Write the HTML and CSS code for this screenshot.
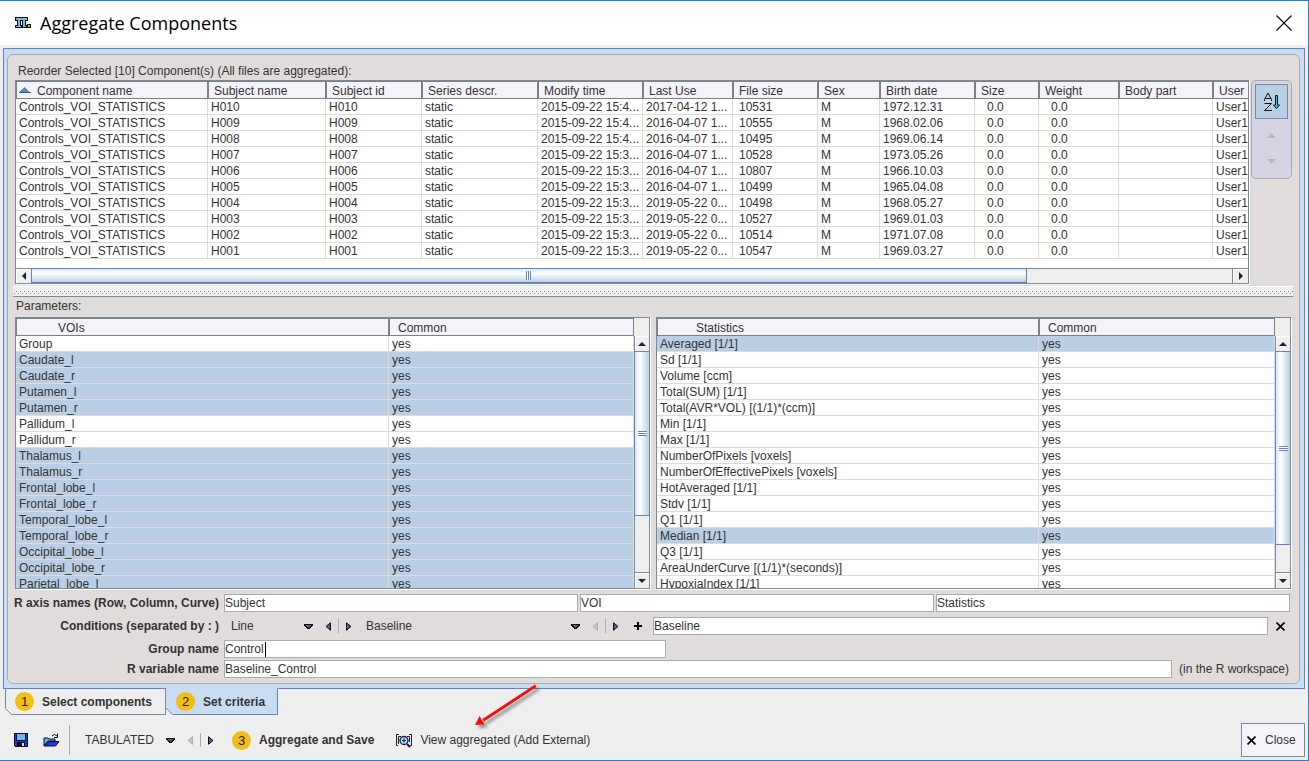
FILE: index.html
```html
<!DOCTYPE html>
<html lang="en">
<head>
<meta charset="utf-8">
<title>Aggregate Components</title>
<link rel="stylesheet" href="styles.css">
</head>
<body>
<svg class="defs" aria-hidden="true">
  <symbol id="down" viewBox="0 0 9 5" shape-rendering="crispEdges"><path d="M0 0H9V2H8V3H7V4H6V5H3V4H2V3H1V2H0Z" fill="#111"/><path d="M2 1H7V2H6V3H5V4H4V3H3V2H2Z" fill="#5a5a8c"/></symbol>
  <symbol id="left" viewBox="0 0 6 9"><path d="M5.500.700V8.300L1 4.500Z" fill="#5a5a8c" stroke="#111"/></symbol>
  <symbol id="left-off" viewBox="0 0 6 9"><path d="M5.500.700V8.300L1 4.500Z" fill="#c4c4c4" stroke="#b0b0b0"/></symbol>
  <symbol id="right" viewBox="0 0 6 9"><path d="M.500.700V8.300L5 4.500Z" fill="#5a5a8c" stroke="#111"/></symbol>
  <symbol id="cross" viewBox="0 0 9 9"><path d="M.500.500L8.500 8.500M8.500.500L.500 8.500" stroke="#000" stroke-width="1.600"/></symbol>
</svg>
<div class="window">
  <header class="titlebar">
    <svg class="logo" width="16" height="12" viewBox="0 0 16 12" shape-rendering="crispEdges"><path d="M0 0H13V4H11V8H12V11H7V4H6V8H7V11H0V8H2V4H0Z" fill="#111"/><path d="M1 1H12V3H10V9H11V10H8V3H5V9H6V10H1V9H3V3H1Z" fill="#7cb8de"/><path d="M12 7H16V11H12Z" fill="#111"/><path d="M13 8H15V10H13Z" fill="#f59a23"/></svg>
    <h1>Aggregate Components</h1>
    <button class="x" aria-label="Close window"><svg width="16" height="16" viewBox="0 0 16 16"><path d="M.500.500L15.500 15.500M15.500.500L.500 15.500" stroke="#000" stroke-width="1.100"/></svg></button>
  </header>

  <main class="sheet">
    <div class="panel">
      <h2 class="caption">Reorder Selected [10] Component(s) (All files are aggregated):</h2>
      <div class="top">
        <div class="pane">
          <div class="clip components">
            <table class="comp">
              <colgroup><col class="w192"><col class="w118"><col class="w96"><col class="w116"><col class="w105"><col class="w90"><col class="w85"><col class="w62"><col class="w95"><col class="w64"><col class="w80"><col class="w94"><col class="w90"></colgroup>
              <thead><tr><th><svg class="sort" width="12" height="6" viewBox="0 0 12 6"><path d="M1 5.500L6 .500L11 5.500Z" fill="#6d7fae"/><path d="M0 5.500H12M1 5L6 .500" stroke="#1c6f95" fill="none"/></svg>Component name</th><th>Subject name</th><th>Subject id</th><th>Series descr.</th><th>Modify time</th><th>Last Use</th><th>File size</th><th>Sex</th><th>Birth date</th><th>Size</th><th>Weight</th><th>Body part</th><th>User</th></tr></thead>
              <tbody>
              <tr><td>Controls_VOI_STATISTICS</td><td>H010</td><td>H010</td><td>static</td><td>2015-09-22 15:4...</td><td>2017-04-12 1...</td><td>10531</td><td>M</td><td>1972.12.31</td><td>0.0</td><td>0.0</td><td></td><td>User1</td></tr>
              <tr><td>Controls_VOI_STATISTICS</td><td>H009</td><td>H009</td><td>static</td><td>2015-09-22 15:4...</td><td>2016-04-07 1...</td><td>10555</td><td>M</td><td>1968.02.06</td><td>0.0</td><td>0.0</td><td></td><td>User1</td></tr>
              <tr><td>Controls_VOI_STATISTICS</td><td>H008</td><td>H008</td><td>static</td><td>2015-09-22 15:4...</td><td>2016-04-07 1...</td><td>10495</td><td>M</td><td>1969.06.14</td><td>0.0</td><td>0.0</td><td></td><td>User1</td></tr>
              <tr><td>Controls_VOI_STATISTICS</td><td>H007</td><td>H007</td><td>static</td><td>2015-09-22 15:3...</td><td>2016-04-07 1...</td><td>10528</td><td>M</td><td>1973.05.26</td><td>0.0</td><td>0.0</td><td></td><td>User1</td></tr>
              <tr><td>Controls_VOI_STATISTICS</td><td>H006</td><td>H006</td><td>static</td><td>2015-09-22 15:3...</td><td>2016-04-07 1...</td><td>10807</td><td>M</td><td>1966.10.03</td><td>0.0</td><td>0.0</td><td></td><td>User1</td></tr>
              <tr><td>Controls_VOI_STATISTICS</td><td>H005</td><td>H005</td><td>static</td><td>2015-09-22 15:3...</td><td>2016-04-07 1...</td><td>10499</td><td>M</td><td>1965.04.08</td><td>0.0</td><td>0.0</td><td></td><td>User1</td></tr>
              <tr><td>Controls_VOI_STATISTICS</td><td>H004</td><td>H004</td><td>static</td><td>2015-09-22 15:3...</td><td>2019-05-22 0...</td><td>10498</td><td>M</td><td>1968.05.27</td><td>0.0</td><td>0.0</td><td></td><td>User1</td></tr>
              <tr><td>Controls_VOI_STATISTICS</td><td>H003</td><td>H003</td><td>static</td><td>2015-09-22 15:3...</td><td>2019-05-22 0...</td><td>10527</td><td>M</td><td>1969.01.03</td><td>0.0</td><td>0.0</td><td></td><td>User1</td></tr>
              <tr><td>Controls_VOI_STATISTICS</td><td>H002</td><td>H002</td><td>static</td><td>2015-09-22 15:3...</td><td>2019-05-22 0...</td><td>10514</td><td>M</td><td>1971.07.08</td><td>0.0</td><td>0.0</td><td></td><td>User1</td></tr>
              <tr><td>Controls_VOI_STATISTICS</td><td>H001</td><td>H001</td><td>static</td><td>2015-09-22 15:3...</td><td>2019-05-22 0...</td><td>10547</td><td>M</td><td>1969.03.27</td><td>0.0</td><td>0.0</td><td></td><td>User1</td></tr>
              </tbody>
            </table>
          </div>
          <div class="hbar">
            <button class="step" aria-label="Scroll left"><svg width="4" height="8" viewBox="0 0 4 8"><path d="M4 0V8L0 4Z" fill="#222"/></svg></button>
            <div class="thumb hthumb"></div>
            <div class="track htrack"></div>
            <button class="step" aria-label="Scroll right"><svg width="4" height="8" viewBox="0 0 4 8"><path d="M0 0V8L4 4Z" fill="#222"/></svg></button>
          </div>
        </div>
        <div class="order">
          <button class="az" aria-label="Sort A to Z"><svg width="18" height="20" viewBox="0 0 18 20"><path d="M1.500 9V7.500L5 1L8.500 7.500V9M2 6.500H8M1.500 11.500H8.500L1.500 18.500H9" fill="none" stroke="#111"/><path d="M12.500 3.500H14.500V13H16.500L13.500 16.500L10.500 13H12.500Z" fill="#22c3ee" stroke="#111"/></svg></button>
          <button class="move" aria-label="Move up" disabled><svg width="9" height="5" viewBox="0 0 9 5"><path d="M0 5L4.500 0L9 5Z" fill="#b9b9b4"/></svg></button>
          <button class="move" aria-label="Move down" disabled><svg width="9" height="5" viewBox="0 0 9 5"><path d="M0 0L4.500 5L9 0Z" fill="#b9b9b4"/></svg></button>
        </div>
      </div>

      <div class="divider"></div>
      <h2 class="caption params-title">Parameters:</h2>

      <div class="params">
        <div class="pane side">
          <div class="clip">
            <table class="list">
              <colgroup><col class="w373"><col></colgroup>
              <thead><tr><th>VOIs</th><th>Common</th></tr></thead>
              <tbody>
              <tr><td>Group</td><td>yes</td></tr>
              <tr class="sel"><td>Caudate_l</td><td>yes</td></tr>
              <tr class="sel"><td>Caudate_r</td><td>yes</td></tr>
              <tr class="sel"><td>Putamen_l</td><td>yes</td></tr>
              <tr class="sel"><td>Putamen_r</td><td>yes</td></tr>
              <tr><td>Pallidum_l</td><td>yes</td></tr>
              <tr><td>Pallidum_r</td><td>yes</td></tr>
              <tr class="sel"><td>Thalamus_l</td><td>yes</td></tr>
              <tr class="sel"><td>Thalamus_r</td><td>yes</td></tr>
              <tr class="sel"><td>Frontal_lobe_l</td><td>yes</td></tr>
              <tr class="sel"><td>Frontal_lobe_r</td><td>yes</td></tr>
              <tr class="sel"><td>Temporal_lobe_l</td><td>yes</td></tr>
              <tr class="sel"><td>Temporal_lobe_r</td><td>yes</td></tr>
              <tr class="sel"><td>Occipital_lobe_l</td><td>yes</td></tr>
              <tr class="sel"><td>Occipital_lobe_r</td><td>yes</td></tr>
              <tr class="sel"><td>Parietal_lobe_l</td><td>yes</td></tr>
              </tbody>
            </table>
          </div>
          <div class="vbar">
            <div class="corner"></div>
            <button class="step" aria-label="Scroll up"><svg width="8" height="4" viewBox="0 0 8 4"><path d="M0 4H8L4 0Z" fill="#222"/></svg></button>
            <div class="thumb vthumb thumb-75"></div>
            <div class="track vtrack"></div>
            <button class="step" aria-label="Scroll down"><svg width="8" height="4" viewBox="0 0 8 4"><path d="M0 0H8L4 4Z" fill="#222"/></svg></button>
          </div>
        </div>
        <div class="pane side">
          <div class="clip">
            <table class="list stats">
              <colgroup><col class="w382"><col></colgroup>
              <thead><tr><th>Statistics</th><th>Common</th></tr></thead>
              <tbody>
              <tr class="sel"><td>Averaged [1/1]</td><td>yes</td></tr>
              <tr><td>Sd [1/1]</td><td>yes</td></tr>
              <tr><td>Volume [ccm]</td><td>yes</td></tr>
              <tr><td>Total(SUM) [1/1]</td><td>yes</td></tr>
              <tr><td>Total(AVR*VOL) [(1/1)*(ccm)]</td><td>yes</td></tr>
              <tr><td>Min [1/1]</td><td>yes</td></tr>
              <tr><td>Max [1/1]</td><td>yes</td></tr>
              <tr><td>NumberOfPixels [voxels]</td><td>yes</td></tr>
              <tr><td>NumberOfEffectivePixels [voxels]</td><td>yes</td></tr>
              <tr><td>HotAveraged [1/1]</td><td>yes</td></tr>
              <tr><td>Stdv [1/1]</td><td>yes</td></tr>
              <tr><td>Q1 [1/1]</td><td>yes</td></tr>
              <tr class="sel"><td>Median [1/1]</td><td>yes</td></tr>
              <tr><td>Q3 [1/1]</td><td>yes</td></tr>
              <tr><td>AreaUnderCurve [(1/1)*(seconds)]</td><td>yes</td></tr>
              <tr><td>HypoxiaIndex [1/1]</td><td>yes</td></tr>
              </tbody>
            </table>
          </div>
          <div class="vbar">
            <div class="corner"></div>
            <button class="step" aria-label="Scroll up"><svg width="8" height="4" viewBox="0 0 8 4"><path d="M0 4H8L4 0Z" fill="#222"/></svg></button>
            <div class="thumb vthumb thumb-88"></div>
            <div class="track vtrack"></div>
            <button class="step" aria-label="Scroll down"><svg width="8" height="4" viewBox="0 0 8 4"><path d="M0 0H8L4 4Z" fill="#222"/></svg></button>
          </div>
        </div>
      </div>

      <form class="form">
        <div class="row axes">
          <label for="axis-row">R axis names (Row, Column, Curve)</label>
          <input id="axis-row" value="Subject">
          <input aria-label="Column axis" value="VOI">
          <input aria-label="Curve axis" value="Statistics">
        </div>
        <div class="row">
          <label for="cond">Conditions (separated by : )</label>
          <div class="picker">
            <select id="cond" class="w80"><option>Line</option></select>
            <svg class="arrow" width="9" height="5"><use href="#down"/></svg>
            <button type="button" class="nav" aria-label="Previous"><svg width="6" height="9"><use href="#left"/></svg></button>
            <span class="bar"></span>
            <button type="button" class="nav" aria-label="Next"><svg width="6" height="9"><use href="#right"/></svg></button>
          </div>
          <div class="picker">
            <select aria-label="Condition value" class="w212"><option>Baseline</option></select>
            <svg class="arrow" width="9" height="5"><use href="#down"/></svg>
            <button type="button" class="nav" aria-label="Previous value"><svg width="6" height="9"><use href="#left-off"/></svg></button>
            <span class="bar"></span>
            <button type="button" class="nav" aria-label="Next value"><svg width="6" height="9"><use href="#right"/></svg></button>
          </div>
          <button type="button" class="add" aria-label="Add"><svg width="8" height="8" viewBox="0 0 8 8"><path d="M4 0V8M0 4H8" stroke="#000" stroke-width="2"/></svg></button>
          <input aria-label="Condition list" value="Baseline">
          <button type="button" class="clear" aria-label="Clear conditions"><svg width="9" height="9"><use href="#cross"/></svg></button>
        </div>
        <div class="row">
          <label for="group">Group name</label>
          <div class="group"><input id="group" value="Control"><span class="caret"></span></div>
        </div>
        <div class="row tight">
          <label for="var">R variable name</label>
          <input id="var" value="Baseline_Control">
          <span class="note">(in the R workspace)</span>
        </div>
      </form>
    </div>
  </main>

  <nav class="tabs">
    <button class="tab"><svg class="edge" width="7" height="7" viewBox="0 0 7 7"><path d="M0 0L7 7H0Z" fill="#eee"/><path d="M.500 0V.500L6.500 6.500H7" stroke="#7a8a99" fill="none"/></svg><span class="num">1</span>Select components</button>
    <button class="tab active"><svg class="edge" width="7" height="7" viewBox="0 0 7 7"><path d="M0 0L7 7H0Z" fill="#eee"/><path d="M.500 0V.500L6.500 6.500H7" stroke="#6382bf" fill="none"/></svg><span class="num">2</span>Set criteria</button>
  </nav>

  <footer class="tools">
    <button class="ico" aria-label="Save"><svg width="14" height="14" viewBox="0 0 14 14" shape-rendering="crispEdges"><path d="M0 0H14V14H1L0 13Z" fill="#0a0a2a"/><path d="M1 1H2V8H12V1H13V13H1Z" fill="#2038d8"/><path d="M3 1H11V7H3Z" fill="#62b8f4"/><path d="M3 9H11V13H3Z" fill="#111"/><path d="M8 10H10V13H8Z" fill="#ddd"/></svg></button>
    <button class="ico open" aria-label="Open"><svg width="17" height="14" viewBox="0 0 17 14"><path d="M1 13V5H5L6 6H12V8H5Z" fill="#62b8f4" stroke="#0a0a2a"/><path d="M1 13L5 8.500H16L12.500 13Z" fill="#2038d8" stroke="#0a0a2a"/><path d="M9 3Q11.500 0 14 3M14.500 .500V4.500H11" fill="none" stroke="#111"/></svg></button>
    <span class="rule"></span>
    <div class="picker">
      <select aria-label="Format" class="w88"><option>TABULATED</option></select>
      <svg class="arrow" width="9" height="5"><use href="#down"/></svg>
      <button class="nav" aria-label="Previous format"><svg width="6" height="9"><use href="#left-off"/></svg></button>
      <span class="bar"></span>
      <button class="nav" aria-label="Next format"><svg width="6" height="9"><use href="#right"/></svg></button>
    </div>
    <button class="action strong"><span class="num">3</span>Aggregate and Save</button>
    <button class="action view"><svg width="18" height="15" viewBox="0 0 18 15"><path d="M4 1.500H1.500V12.500H3M6 3.500H3.500V11M14 1.500H16.500V12.500H15M12 3.500H14.500V9" fill="none" stroke="#222"/><path d="M12 11L15 14" stroke="#301438" stroke-width="2"/><circle cx="9" cy="7.500" r="4" fill="#8fe0fa" stroke="#301438" stroke-width="1.300"/><path d="M9 5.500V9.500M7 7.500H11" stroke="#20205a"/></svg>View aggregated (Add External)
      <svg class="pointer" width="76" height="50" viewBox="0 0 76 50"><defs><filter id="sh" x="-20%" y="-20%" width="150%" height="150%"><feDropShadow dx="3" dy="3" stdDeviation="1.500" flood-color="#000" flood-opacity=".4"/></filter></defs><g filter="url(#sh)" fill="#f50f0f"><path d="M65 1.500L66.500 4L14 38.500L12.500 36Z"/><path d="M5 42L9.500 33L14.500 41.500Z"/></g></svg>
    </button>
    <button class="close"><svg width="9" height="9"><use href="#cross"/></svg>Close</button>
  </footer>
</div>
</body>
</html>
```

FILE: styles.css
```css
* { box-sizing: border-box; }
body { margin: 0; background: #eee; color: #333; font: 12px/16px "Liberation Sans", Arial, sans-serif; }
button, input, select { font: inherit; color: inherit; margin: 0; }
button { display: flex; align-items: center; justify-content: center; padding: 0; border: 0; background: none; }
svg { display: block; flex: none; }
.defs { position: absolute; width: 0; height: 0; }

.window { display: flex; flex-direction: column; height: 100vh; min-height: 560px; border: solid #1883d7; border-width: 1px 1px 1px 0; background: #eee; overflow: hidden; }
.titlebar { display: flex; align-items: center; flex: none; height: 44px; padding: 0 16px 0 15px; background: #fff; color: #000; }
.titlebar h1 { flex: 1; margin: 0 0 0 9px; font: 18px/24px "Open Sans", "Noto Sans", sans-serif; }

.sheet { display: flex; flex: 1; min-height: 0; margin: 3px 3px 0; padding: 5px 4px 4px 3px; border: 1px solid #6382bf; background: #c8ddf2; }
.panel { display: flex; flex-direction: column; flex: 1; min-width: 0; padding: 7px 7px 5px; border: 1px solid #aaa; border-radius: 6px; background: #e0dcdb; }
.caption { flex: none; margin: 0; padding-left: 3px; font-size: 12px; line-height: 18px; font-weight: normal; }
.params-title { padding: 0 0 2px 1px; }

.top { display: flex; align-items: flex-start; gap: 2px; flex: none; }
.pane { display: flex; flex-direction: column; flex: 1; min-width: 0; min-height: 0; border: 1px solid #7a8a99; background: #fff; box-shadow: 1px 1px 0 #fff; }
.pane.side { flex-direction: row; }
.clip { flex: 1; min-width: 0; min-height: 0; overflow: hidden; }
.components { padding-bottom: 9px; }

table { table-layout: fixed; border-collapse: separate; border-spacing: 0; }
.comp { width: 1287px; }
.list { width: 100%; }
th, td { padding: 2px 0 0 3px; text-align: left; white-space: nowrap; overflow: hidden; line-height: 13px; }
th { padding-left: 5px; border: 1px solid #808080; background: #f5f3fa; font-weight: normal; line-height: 14px; }
td { height: 16px; border: solid #dcdcdc; border-width: 0 1px 1px 0; }
.comp th:first-child { padding-left: 2px; }
.comp td:nth-child(7) { padding-left: 6px; }
.comp td:nth-child(10), .comp td:nth-child(11) { padding-left: 12px; }
.list th { padding-left: 8px; }
.list th:first-child { padding-left: 41px; }
.list.stats th:first-child { padding-left: 38px; }
.sel td { background: #b8cfe5; }
.sort { display: inline-block; margin-right: 6px; vertical-align: 2px; }

.w62 { width: 62px; } .w64 { width: 64px; } .w80 { width: 80px; } .w88 { width: 88px; } .w85 { width: 85px; } .w90 { width: 90px; }
.w94 { width: 94px; } .w95 { width: 95px; } .w96 { width: 96px; } .w105 { width: 105px; } .w116 { width: 116px; }
.w118 { width: 118px; } .w192 { width: 192px; } .w212 { width: 212px; } .w373 { width: 373px; } .w382 { width: 382px; }

.hbar { display: flex; flex: none; height: 15px; border-top: 1px solid #7a8a99; background: #eee; }
.hbar .step { width: 15px; }
.step { flex: none; background: #eee; box-shadow: inset 1px 1px 0 #fff; }
.thumb { display: flex; align-items: center; justify-content: center; flex: none; border: 1px solid #6382bf; }
.hthumb { flex: 996 1 0; margin-top: -1px; background: linear-gradient(#dbe8f4, #fff 35%, #b8cfe5); }
.hthumb::before { content: ""; width: 5px; height: 9px; background: repeating-linear-gradient(90deg, #6382bf 0 1px, #fff 1px 2px); }
.track { flex: 1; background: #eee; }
.htrack { flex: 206 1 0; border-right: 1px solid #7a8a99; }
.vbar { display: flex; flex-direction: column; flex: none; width: 15px; background: #eee; }
.vbar .step { height: 15px; border-left: 1px solid #7a8a99; }
.corner { height: 18px; }
.vthumb { border-right: 0; background: linear-gradient(90deg, #dbe8f4, #fff 35%, #b8cfe5); }
.vthumb::before { content: ""; width: 9px; height: 5px; background: repeating-linear-gradient(#6382bf 0 1px, #fff 1px 2px); }
.thumb-75 { height: 61%; }
.thumb-88 { height: 72%; }
.vtrack { border-left: 1px solid #7a8a99; border-bottom: 1px solid #7a8a99; }

.order { display: flex; flex-direction: column; align-items: center; flex: none; width: 41px; height: 99px; padding-top: 3px; border: 1px solid #aaa; border-radius: 5px; background: #d6d4e4; }
.az { width: 33px; height: 35px; border: 1px solid #7a8a99; background: #b8cfe5; }
.move { width: 33px; height: 26px; }
.az + .move { margin-top: 3px; }

.divider { flex: none; height: 11px; margin: 2px -1px 0 -2px; border: solid #fff; border-width: 1px 0 0; border-bottom: 1px solid #7a8a99; background: linear-gradient(90deg, #7a8a99 1px, transparent 1px) 3px 4px / 4px 1px repeat-x, linear-gradient(90deg, #7a8a99 1px, transparent 1px) 1px 6px / 4px 1px repeat-x, #eee; }
.params { display: flex; gap: 6px; flex: 1; min-height: 0; padding-right: 1px; }

.form { flex: none; margin: 0; padding-top: 5px; }
.row { display: flex; align-items: center; height: 18px; margin-bottom: 5px; }
.row:nth-child(3) { margin-bottom: 2px; }
.row.tight { margin-bottom: 0; }
.row label { display: flex; justify-content: flex-end; flex: none; width: 204px; margin-right: 5px; font-weight: bold; white-space: nowrap; }
.row input { flex: 1; min-width: 0; height: 18px; padding: 0; border: 1px solid #aaa; background: #fff; outline: 0; }
.axes { padding-right: 2px; }
.axes input + input { margin-left: 2px; }
.group { position: relative; display: flex; flex: 0 0 442px; }
.caret { position: absolute; left: 41px; top: 2px; width: 1px; height: 15px; background: #000; }
.note { flex: 0 0 113px; margin-left: 7px; }

.picker { display: flex; align-items: center; }
select { appearance: none; height: 18px; padding: 0 0 0 7px; border: 0; background: none; outline: 0; }
.nav { width: 20px; height: 18px; }
.arrow + .nav { margin-left: 5px; }
.bar { width: 1px; height: 14px; background: #aaa; }
.add { width: 24px; height: 18px; margin-right: 3px; }
.clear { width: 24px; height: 18px; }

.tabs { display: flex; flex: none; padding-left: 5px; margin-top: -1px; }
.tab { position: relative; height: 27px; padding: 0 13px 0 9px; border: 1px solid #7a8a99; border-top-color: #6382bf; font-weight: bold; }
.tab.active { padding: 0 12px 0 9px; border-color: #c8ddf2 #6382bf #6382bf #c8ddf2; background: #c8ddf2; }
.edge { position: absolute; left: -1px; bottom: -1px; }
.num { width: 19px; height: 19px; margin-right: 8px; border-radius: 50%; background: #f2bd14; color: #222; font-size: 13px; line-height: 19px; font-weight: normal; text-align: center; }

.tools { display: flex; align-items: center; flex: none; padding: 8px 3px 3px 10px; }
.ico { width: 22px; height: 30px; }
.open { margin-left: 8px; }
.rule { width: 1px; height: 30px; margin: 0 8px 0 7px; background: #aaa; }
.action { height: 30px; }
.strong { margin-left: 11px; font-weight: bold; }
.view { position: relative; gap: 7px; margin-left: 21px; }
.pointer { position: absolute; left: 75px; bottom: 22px; pointer-events: none; }
.close { justify-content: flex-start; gap: 9px; width: 64px; height: 34px; margin-left: auto; padding-left: 5px; border: 1px solid #7a8a99; background: #f5f3fa; }
```
